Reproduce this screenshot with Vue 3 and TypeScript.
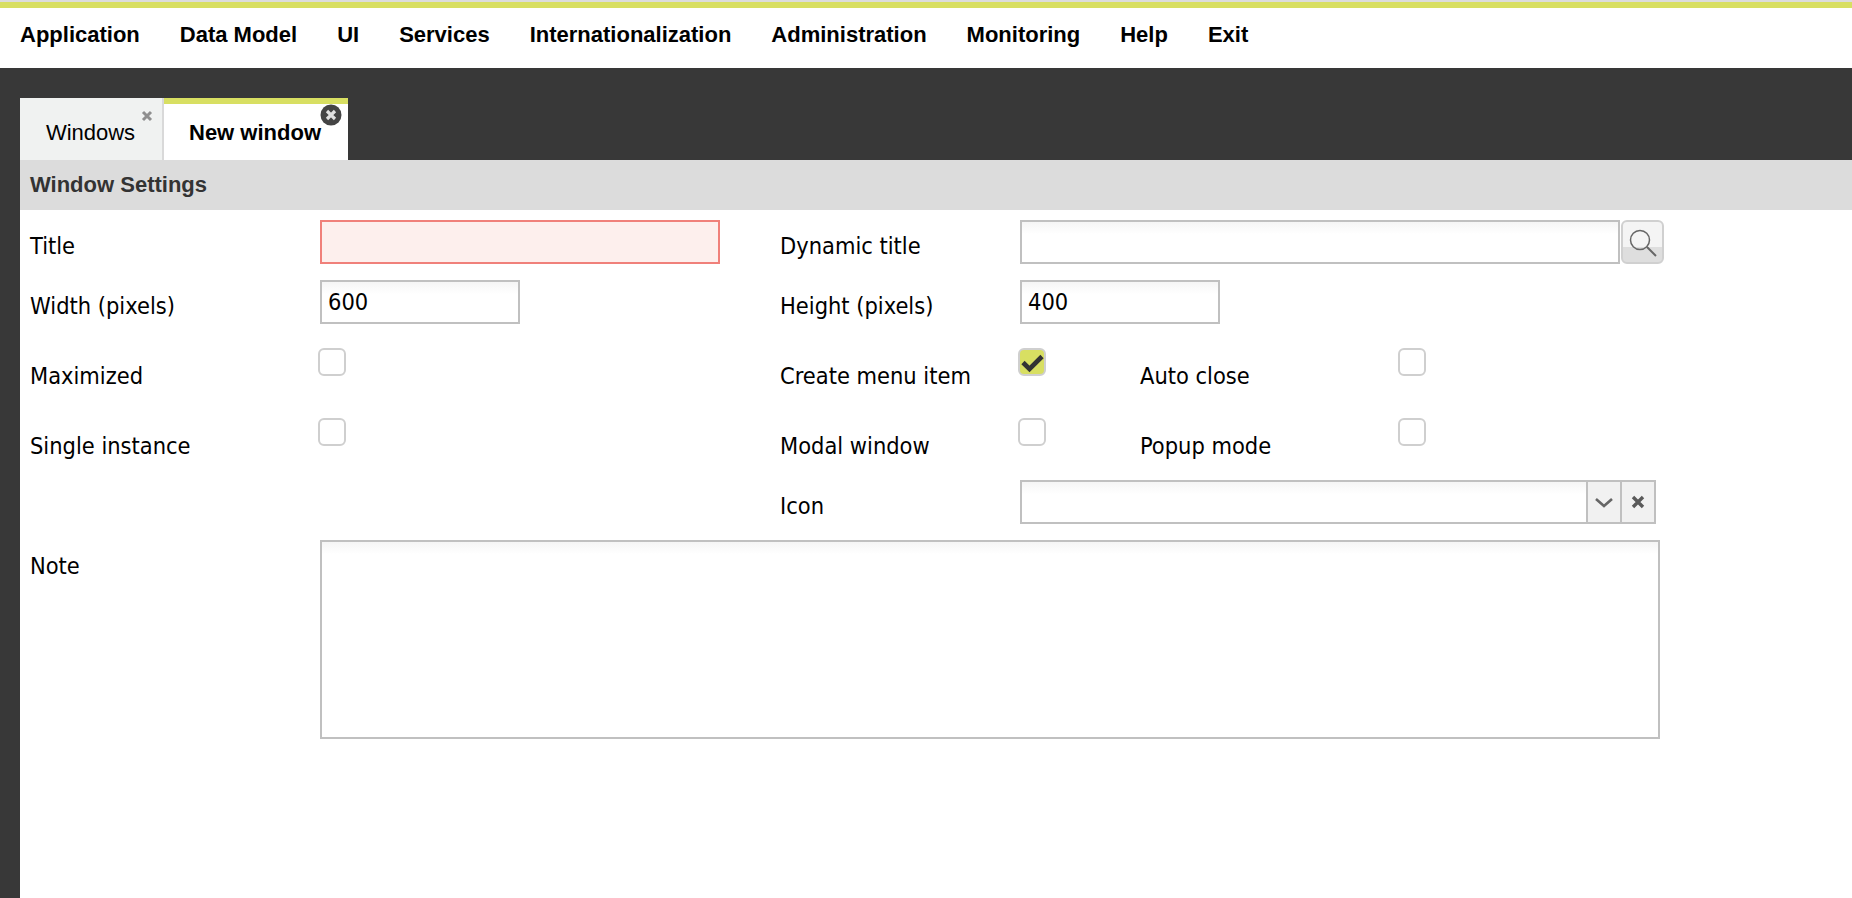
<template>
  <div class="page">
    <nav class="menu">
      <span v-for="item in menuItems" :key="item" class="menu-item">{{ item }}</span>
    </nav>

    <div class="workspace">
      <div class="tabs">
        <div class="tab">
          Windows
          <svg class="tab-close" viewBox="0 0 12 12">
            <path d="M2 2l8 8M10 2l-8 8" stroke="#8f8f8f" stroke-width="3" fill="none" />
          </svg>
        </div>
        <div class="tab active">
          New window
          <svg class="tab-close-active" viewBox="0 0 22 22">
            <circle cx="11" cy="11" r="10.5" fill="#444" />
            <path d="M7 7l8 8M15 7l-8 8" stroke="#e0e0e0" stroke-width="3.2" fill="none" />
          </svg>
        </div>
      </div>

      <div class="content">
        <div class="section-title">Window Settings</div>

        <div class="form">
          <div class="row row-input">
            <label class="label">Title</label>
            <input class="field field-error col-left" type="text" />
            <label class="label label-right">Dynamic title</label>
            <input class="field field-wide" type="text" />
            <button class="search-btn" type="button">
              <svg viewBox="0 0 32 32" width="32" height="32">
                <circle cx="13" cy="12" r="9.5" fill="none" stroke="#666" stroke-width="1.5" />
                <path d="M20 19l9 9" stroke="#666" stroke-width="2" />
              </svg>
            </button>
          </div>

          <div class="row row-input">
            <label class="label">Width (pixels)</label>
            <div class="col-left"><input class="field field-short" type="text" value="600" /></div>
            <label class="label label-right">Height (pixels)</label>
            <input class="field field-short" type="text" value="400" />
          </div>

          <div class="row row-check">
            <label class="label">Maximized</label>
            <div class="col-left"><span class="check"></span></div>
            <label class="label label-right">Create menu item</label>
            <span class="check checked">
              <svg viewBox="0 0 28 28" width="28" height="28">
                <path d="M5 14.5l6.5 6.5L24 8.5" stroke="#333" stroke-width="4.6" fill="none" />
              </svg>
            </span>
            <label class="label label-third">Auto close</label>
            <span class="check"></span>
          </div>

          <div class="row row-check">
            <label class="label">Single instance</label>
            <div class="col-left"><span class="check"></span></div>
            <label class="label label-right">Modal window</label>
            <span class="check"></span>
            <label class="label label-third">Popup mode</label>
            <span class="check"></span>
          </div>

          <div class="row row-input row-icon">
            <label class="label"></label>
            <div class="col-left"></div>
            <label class="label label-right">Icon</label>
            <div class="combo">
              <div class="combo-input"></div>
              <span class="combo-btn">
                <svg viewBox="0 0 20 20" width="20" height="20">
                  <path d="M2 7l8 7 8-7" stroke="#666" stroke-width="2.6" fill="none" />
                </svg>
              </span>
              <span class="combo-btn">
                <svg viewBox="0 0 20 20" width="20" height="20">
                  <path d="M5 5l10 10M15 5L5 15" stroke="#5a5a5a" stroke-width="3.4" fill="none" />
                </svg>
              </span>
            </div>
          </div>

          <div class="row row-note">
            <label class="label label-note">Note</label>
            <textarea class="note"></textarea>
          </div>
        </div>
      </div>
    </div>
  </div>
</template>

<script setup lang="ts">
const menuItems: string[] = [
  'Application',
  'Data Model',
  'UI',
  'Services',
  'Internationalization',
  'Administration',
  'Monitoring',
  'Help',
  'Exit',
]
</script>

<style>
html,
body {
  margin: 0;
  background: #fff;
  overflow: hidden;
}
</style>

<style scoped>
.page {
  height: 898px;
  display: flex;
  flex-direction: column;
  font-family: "Liberation Sans", Arial, sans-serif;
  color: #000;
  background: #fff;
  border-top: 2px solid #dcdcdc;
  box-sizing: border-box;
}

.menu {
  display: flex;
  align-items: center;
  gap: 40px;
  padding: 1px 20px 7px;
  border-top: 6px solid #d8df62;
  height: 52px;
  font-size: 22px;
  font-weight: 700;
}

.workspace {
  flex: 1;
  display: flex;
  flex-direction: column;
  background: #383838;
  padding: 30px 0 0 20px;
}

.tabs {
  display: flex;
  height: 62px;
}

.tab {
  position: relative;
  width: 144px;
  display: flex;
  align-items: center;
  justify-content: center;
  padding: 8px 1px 0 0;
  box-sizing: border-box;
  background: #f0f2f1;
  border-right: 2px solid #d9d9d9;
  font-size: 22px;
}

.tab.active {
  width: 184px;
  background: #fff;
  border-top: 6px solid #d8df62;
  border-right: 0;
  padding: 2px 2px 0 0;
  font-weight: 700;
}

.tab-close {
  position: absolute;
  top: 12px;
  right: 9px;
  width: 12px;
  height: 12px;
}

.tab-close-active {
  position: absolute;
  top: 0;
  right: 6px;
  width: 22px;
  height: 22px;
}

.content {
  flex: 1;
  background: #fff;
}

.section-title {
  height: 50px;
  line-height: 50px;
  padding-left: 10px;
  background: #dcdcdc;
  color: #333;
  font-size: 22px;
  font-weight: 700;
}

.form {
  padding: 10px 0 0 10px;
  font-family: "DejaVu Sans Condensed", "DejaVu Sans", sans-serif;
}

.row {
  display: flex;
  align-items: flex-start;
}

.row-input {
  height: 60px;
}

.row-check {
  height: 70px;
}

.row-note {
  height: 200px;
}

.label {
  width: 290px;
  flex: none;
  font-size: 23.4px;
  line-height: 26px;
  padding-top: 13px;
}

.row-check .label {
  padding-top: 23px;
}

.label-note {
  padding-top: 13px;
}

.col-left {
  width: 460px;
  flex: none;
}

.label-right {
  width: 240px;
}

.label-third {
  width: 260px;
  margin-left: 93px;
  padding-left: 1px;
}

.field {
  height: 44px;
  box-sizing: border-box;
  border: 2px solid #c0c0c0;
  padding: 0 6px;
  font-family: inherit;
  font-size: 23.4px;
  background: linear-gradient(#f5f5f5, #fff 12px);
  outline: none;
}

.field-error {
  width: 400px;
  margin-right: 60px;
  border-color: #f0807a;
  background: #fdefed;
}

.field-wide {
  width: 600px;
}

.field-short {
  width: 200px;
}

.search-btn {
  width: 43px;
  height: 44px;
  margin-left: 1px;
  padding: 0;
  box-sizing: border-box;
  border: 2px solid #d0d0d0;
  border-radius: 6px;
  background: linear-gradient(#f4f4f4 62%, #dedede 62%);
}

.search-btn svg {
  display: block;
  margin: 3px auto 0;
}

.check {
  display: block;
  width: 28px;
  height: 28px;
  margin: 8px 0 0 -2px;
  box-sizing: border-box;
  border: 2px solid #cfcfcf;
  border-radius: 6px;
  background: #fff;
  flex: none;
}

.check.checked {
  background: #d8df62;
}

.check svg {
  display: block;
  margin: -2px;
}

.combo {
  width: 636px;
  height: 44px;
  display: flex;
  box-sizing: border-box;
  border: 2px solid #c0c0c0;
  background: linear-gradient(#f5f5f5, #fff 12px);
}

.combo-input {
  flex: 1;
}

.combo-btn {
  width: 32px;
  display: flex;
  align-items: center;
  justify-content: center;
  background: #f1f1f1;
  border-left: 2px solid #c0c0c0;
}

.note {
  display: block;
  width: 1340px;
  height: 199px;
  box-sizing: border-box;
  margin: 0;
  border: 2px solid #c0c0c0;
  background: linear-gradient(#f5f5f5, #fff 12px);
  resize: none;
  outline: none;
}
</style>
